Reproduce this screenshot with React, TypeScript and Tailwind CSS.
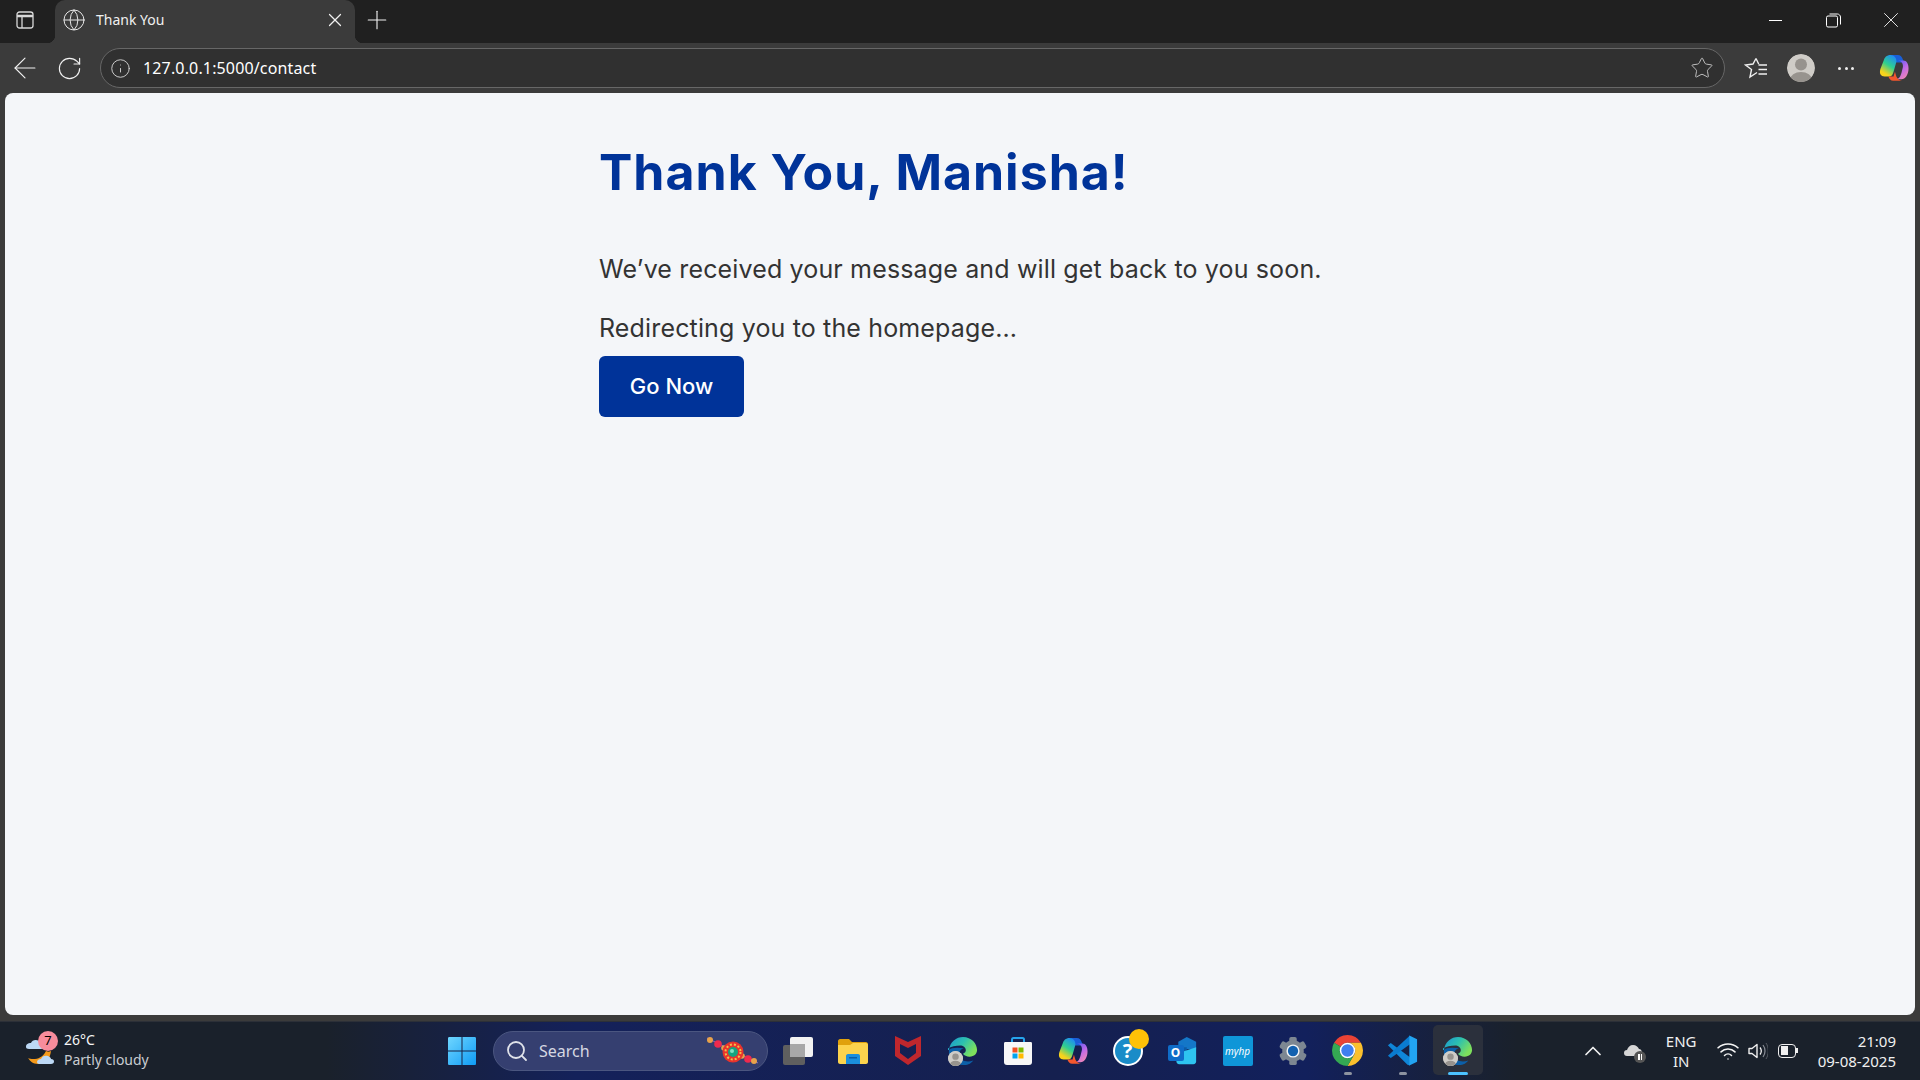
import { ArrowLeft, ChevronUp, Globe, Info, Plus, RotateCw, Search, Star, Wifi, X } from "lucide-react";

function Copilot({ size = 30, id }: { size?: number; id: string }) {
  return (
    <svg width={size} height={size} viewBox="0 0 32 32">
      <defs>
        <linearGradient id={`${id}a`} x1="0.7" y1="0" x2="0.2" y2="1">
          <stop offset="0" stopColor="#1f8ef0" />
          <stop offset="0.45" stopColor="#2fd08f" />
          <stop offset="0.85" stopColor="#f7d21c" />
        </linearGradient>
        <linearGradient id={`${id}b`} x1="0.2" y1="0" x2="0.8" y2="1">
          <stop offset="0" stopColor="#5d5cf2" />
          <stop offset="0.5" stopColor="#c06ae8" />
          <stop offset="1" stopColor="#f58ab0" />
        </linearGradient>
      </defs>
      <path fill="#1a5fd8" d="M12 2h8c3 0 4.500 2 5.500 5l1 3H19c-1.500 0-2.500-1-3-2.500l-.8-2.500C14.500 3.500 13.500 2.500 12 2z" />
      <path fill={`url(#${id}b)`} d="M20 8h6c3.500 0 5.500 3.500 5.500 8.500C31.500 23 28 28 24 28h-6c3 0 5-3 6-7l1.500-6c.7-3.500-2-7-5.500-7z" />
      <path fill={`url(#${id}a)`} d="M12.500 2C8 2 6 4.500 5 8l-3.500 9C0 22 2 25 6 25h5.500c2 0 3-2 4-5l3-10.500C19 6.500 17 2 12.500 2z" />
      <path fill="#f4572e" d="M10 25h5.500l1.500-5 1.500 5c1 2.500 3 4 6 4.500H15c-2.500 0-4-2-5-4.500z" />
    </svg>
  );
}

function EdgeIcon({ id }: { id: string }) {
  return (
    <div className="relative h-[30px] w-[30px]">
      <svg width="30" height="30" viewBox="0 0 32 32">
        <defs>
          <linearGradient id={`${id}a`} x1="0" y1="0" x2="1" y2="0.5">
            <stop offset="0" stopColor="#1a8fd8" />
            <stop offset="0.55" stopColor="#2cc0b0" />
            <stop offset="1" stopColor="#7ee05c" />
          </linearGradient>
        </defs>
        <path fill="#0c5fa8" d="M1 15c-1 9 6 16 15 16 4 0 8-1 11-5-7 3-15 0-15-6 0-3 1-6 5-7-6-1-14-1-16 2z" />
        <path fill={`url(#${id}a)`} d="M1 15C2 6 9 1 16 1c9 0 15 7 15 14 0 4-3 7-8 7-3 0-6-1-7-3 2-1 3-2 3-4 0-3-3-5-6-5-6 0-13 2-15 5z" />
      </svg>
      <div className="absolute bottom-0 left-0 flex h-[15px] w-[15px] items-center justify-center overflow-hidden rounded-full bg-[#cfccc7]">
        <Avatar size={15} />
      </div>
    </div>
  );
}

function Avatar({ size }: { size: number }) {
  return (
    <svg width={size} height={size} viewBox="0 0 28 28">
      <circle cx="14" cy="14" r="14" fill="#cfccc7" />
      <circle cx="14" cy="10.5" r="6" fill="#97938e" />
      <ellipse cx="14" cy="26" rx="11" ry="8" fill="#97938e" />
    </svg>
  );
}

function Chrome() {
  return (
    <svg width="31" height="31" viewBox="4 4 40 40">
      <path fill="#ea4335" d="M24 4A20 20 0 0 1 41.32 14H24A10 10 0 0 0 15.34 19L6.68 14A20 20 0 0 1 24 4z" />
      <path fill="#fbc02d" d="M41.32 14A20 20 0 0 1 24 44L32.66 29A10 10 0 0 0 24 14z" />
      <path fill="#34a853" d="M24 44A20 20 0 0 1 6.68 14L15.34 19A10 10 0 0 0 32.66 29z" />
      <circle cx="24" cy="24" r="10" fill="#fff" />
      <circle cx="24" cy="24" r="8" fill="#3f7ff0" />
    </svg>
  );
}

function VsCode() {
  return (
    <svg width="31" height="31" viewBox="0 0 100 100">
      <polygon fill="#0f86d8" points="3,33 12,26 74,72 74,98 66,96" />
      <polygon fill="#0a7bd0" points="74,2 74,30 24,66 12,74 3,67" />
      <polygon fill="#22a4f2" points="72,2 97,14 97,86 72,98" />
    </svg>
  );
}

function Gear() {
  const teeth = [0, 60, 120, 180, 240, 300];
  return (
    <svg width="30" height="30" viewBox="0 0 32 32">
      {teeth.map((a) => (
        <rect key={a} x="12" y="1" width="8" height="8" rx="2" fill="#7d8792" transform={`rotate(${a} 16 16)`} />
      ))}
      <circle cx="16" cy="16" r="11.5" fill="#7d8792" />
      <circle cx="16" cy="16" r="7" fill="#f2f4f6" />
      <circle cx="16" cy="16" r="5.5" fill="#1261b0" />
    </svg>
  );
}

function Outlook() {
  return (
    <div className="relative h-[30px] w-[30px]">
      <svg width="30" height="30" viewBox="0 0 32 32">
        <path fill="#1477c8" d="M11 6l9-5 10 5v8H11z" />
        <path fill="#0c5ca8" d="M9 12h11v8H9z" />
        <path fill="#2ec4f0" d="M9 19l21-7v15c0 2-1 3-3 3H12c-2 0-3-1-3-3z" />
      </svg>
      <div className="absolute left-0 top-[9px] flex h-[16px] w-[16px] items-center justify-center rounded-[2px] bg-[#0f6cc8] font-['Noto_Sans',sans-serif] text-[12px] font-bold leading-none text-white">
        O
      </div>
    </div>
  );
}

function Store() {
  return (
    <svg width="30" height="30" viewBox="0 0 30 30">
      <path d="M9 7V3.5c0-1 .5-1.500 1.500-1.500h9c1 0 1.500.5 1.500 1.500V7" fill="none" stroke="#26a4ec" strokeWidth="2" />
      <path fill="#f7f7f7" d="M1 7.500c0-1 .5-1.500 1.500-1.500h25c1 0 1.500.5 1.500 1.500V26c0 2-1 3-3 3H4c-2 0-3-1-3-3z" />
      <rect x="9.500" y="11.500" width="5" height="5" fill="#f25022" />
      <rect x="15.500" y="11.500" width="5" height="5" fill="#7fba00" />
      <rect x="9.500" y="17.500" width="5" height="5" fill="#00a4ef" />
      <rect x="15.500" y="17.500" width="5" height="5" fill="#ffb900" />
    </svg>
  );
}

function Folder() {
  return (
    <svg width="32" height="30" viewBox="0 0 32 30">
      <path fill="#e0a10c" d="M1 5c0-1 1-2 2-2h9l3 3h14c1 0 2 1 2 2v4H1z" />
      <path fill="#fcd34d" d="M1 9h12l3-2h13c1 0 2 1 2 2v17c0 1-1 2-2 2H3c-1 0-2-1-2-2z" />
      <path fill="#1b8fdd" d="M9 20c0-1 .5-2 2-2h10c1.500 0 2 1 2 2v8H9z" />
      <rect x="12" y="21" width="8" height="1.500" fill="#0b5fa8" />
    </svg>
  );
}

function Rakhi() {
  return (
    <svg width="55" height="30" viewBox="0 0 55 30">
      <line x1="2" y1="2" x2="53" y2="27" stroke="#8b6bc4" strokeWidth="1" />
      <circle cx="5" cy="4" r="3" fill="#e8a24a" />
      <circle cx="13" cy="8" r="3.800" fill="#ee2a4e" />
      <circle cx="19" cy="12" r="2.800" fill="#e8a24a" />
      <circle cx="37" cy="20" r="2.800" fill="#e8a24a" />
      <circle cx="43" cy="23" r="3.800" fill="#ee2a4e" />
      <circle cx="49" cy="25" r="3" fill="#e8a24a" />
      <circle cx="28" cy="16" r="10.500" fill="#e8332c" />
      <circle cx="28" cy="16" r="7.500" fill="none" stroke="#f2c04a" strokeWidth="2" strokeDasharray="2 2" />
      <circle cx="28" cy="16" r="5" fill="#16a37f" />
      <circle cx="27" cy="15" r="2" fill="#7fe0c4" />
    </svg>
  );
}

function Weather() {
  return (
    <div className="relative h-[40px] w-[38px]">
      <svg width="38" height="40" viewBox="0 0 38 40">
        <path fill="#bcd8f5" d="M2 16c0-3 2-4 5-4 1-3 5-4 8-2 1 1 2 2 2 3 2 0 3 1 3 3 0 1-1 2-3 2H5c-2 0-3-1-3-2z" />
        <path fill="#f59a1a" d="M4 27c4 2 14 2 18-7 2 1 3 1 5 0-1 8-5 13-13 13-5 0-8-3-10-6z" />
        <path fill="#bcd8f5" d="M13 31c0-2 2-3 4-3 1-3 4-4 7-3 2 1 3 2 3 3 2 0 3 1 3 2.500S29 33 27 33H15c-1 0-2-1-2-2z" />
      </svg>
      <div className="absolute left-[14px] top-[0px] flex h-[20px] w-[20px] items-center justify-center rounded-full bg-[#f78c9c] text-[13px] leading-none text-black">
        7
      </div>
    </div>
  );
}

function Slot({ children, active, pin }: { children: React.ReactNode; active?: boolean; pin?: boolean }) {
  return (
    <div className="relative flex h-[55px] w-[55px] shrink-0 items-center justify-center">
      {active && <div className="absolute left-[2.500px] top-[2px] h-[50px] w-[50px] rounded-[5px] bg-[#2b303c]" />}
      <div className="relative">{children}</div>
      {active && <div className="absolute bottom-[3px] left-[17.500px] h-[3px] w-[20px] rounded-full bg-[#4cc2ff]" />}
      {pin && <div className="absolute bottom-[3px] left-[23.500px] h-[3px] w-[8px] rounded-full bg-[#8d93a0]" />}
    </div>
  );
}

export default function App() {
  return (
    <div className="flex h-screen w-[1920px] flex-col overflow-hidden bg-[#3b3b3b] font-['Noto_Sans',sans-serif] text-white">
      {/* window title bar */}
      <div className="flex h-[43px] shrink-0 items-end bg-[#202020]">
        <div className="mr-[5px] flex h-[43px] w-[50px] items-center justify-center pb-[3px]">
          <svg width="18" height="18" viewBox="0 0 18 18" fill="none" stroke="#d8d8d8" strokeWidth="1.300">
            <rect x="1" y="1" width="16" height="16" rx="2.500" />
            <path d="M1 5h16" strokeWidth="2.500" />
            <path d="M6 5v12" />
          </svg>
        </div>
        <div className="relative flex h-[43px] w-[300px] items-center rounded-t-[10px] bg-[#3b3b3b] pb-[3px] pl-[7px] pr-[9px]">
          <div className="absolute bottom-0 left-[-8px] h-[8px] w-[8px] bg-[radial-gradient(circle_at_0_0,#202020_8px,#3b3b3b_8.500px)]" />
          <div className="absolute bottom-0 right-[-8px] h-[8px] w-[8px] bg-[radial-gradient(circle_at_100%_0,#202020_8px,#3b3b3b_8.500px)]" />
          <Globe size={24} strokeWidth={1} color="#e6e6e6" />
          <span className="ml-[10px] flex-1 text-[14px] leading-none text-[#f0f0f0]">Thank You</span>
          <X size={22} strokeWidth={1.300} color="#f0f0f0" />
        </div>
        <div className="flex h-[43px] w-[44px] items-center justify-center pb-[3px]">
          <Plus size={30} strokeWidth={0.900} color="#f0f0f0" />
        </div>
        <div className="ml-auto flex h-[43px] items-center pb-[3px]">
          <div className="flex w-[58px] justify-center">
            <div className="h-px w-[13px] bg-white" />
          </div>
          <div className="flex w-[58px] justify-center">
            <svg width="15" height="15" viewBox="0 0 15 15" fill="none" stroke="#fff" strokeWidth="1">
              <rect x="0.500" y="3" width="11" height="11" rx="1.500" />
              <path d="M3.500 1h8c1.500 0 3 1.500 3 3v7.500" />
            </svg>
          </div>
          <div className="flex w-[58px] justify-center">
            <X size={26} strokeWidth={0.800} color="#fff" />
          </div>
        </div>
      </div>

      {/* toolbar */}
      <div className="flex h-[50px] shrink-0 items-center pl-[8px]">
        <ArrowLeft size={34} strokeWidth={0.800} color="#f2f2f2" />
        <RotateCw size={27} strokeWidth={1} color="#f2f2f2" className="ml-[14px]" />
        <div className="ml-[17px] flex h-[40px] w-[1625px] items-center rounded-full border border-[#676767] bg-[#303030] pl-[9px] pr-[10px]">
          <Info size={21} strokeWidth={1.100} color="#cfcfcf" />
          <span className="ml-[12px] flex-1 text-[16px] leading-none tracking-[0.15px] text-white">127.0.0.1:5000/contact</span>
          <Star size={24} strokeWidth={1} color="#bdbdbd" />
        </div>
        <div className="ml-[16px] flex h-[30px] w-[30px] items-center justify-center">
          <svg width="24" height="22" viewBox="0 0 24 22" fill="none" stroke="#f0f0f0" strokeWidth="1.400">
            <path d="M12 1.500l2.700 5.500M16 8h7M14.500 12.500h8.500M14.500 17h8.500M14.500 8H21M13 15.500l-7 4.500 1.500-7.500L1.500 8l7.500-1 3-5.500" />
          </svg>
        </div>
        <div className="ml-[16px] overflow-hidden rounded-full">
          <Avatar size={28} />
        </div>
        <div className="ml-[16px] flex h-[30px] w-[30px] items-center justify-center gap-[3.500px]">
          <div className="h-[3px] w-[3px] rounded-full bg-[#f0f0f0]" />
          <div className="h-[3px] w-[3px] rounded-full bg-[#f0f0f0]" />
          <div className="h-[3px] w-[3px] rounded-full bg-[#f0f0f0]" />
        </div>
        <div className="ml-[18px]">
          <Copilot size={30} id="cpTop" />
        </div>
      </div>

      {/* page */}
      <div className="flex min-h-0 flex-1 px-[5px] pb-[6px]">
        <div className="flex-1 rounded-[8px] bg-[#f4f6f9] pl-[594px] pt-[49px] font-['Inter',sans-serif]">
          <h1 className="text-[50px] font-bold leading-[60px] tracking-[1px] text-[#003399]">Thank You, Manisha!</h1>
          <p className="mt-[49px] text-[25px] leading-[36px] tracking-[0.15px] text-[#333333]">We’ve received your message and will get back to you soon.</p>
          <p className="mt-[23px] text-[25px] leading-[36px] tracking-[0.15px] text-[#333333]">Redirecting you to the homepage...</p>
          <button className="mt-[10px] flex h-[61px] w-[145px] items-center justify-center rounded-[6px] bg-[#003399] text-[22px] font-medium text-white">
            Go Now
          </button>
        </div>
      </div>

      {/* taskbar */}
      <div className="flex h-[59px] shrink-0 items-center border-t border-[#2c3038] bg-[linear-gradient(90deg,#1a212b_0%,#1a212b_17%,#14215a_30%,#15204f_55%,#12205c_68%,#1a212b_79%,#1a212b_100%)] pb-[1px]">
        <div className="flex w-[434px] shrink-0 items-center pl-[24px]">
          <Weather />
          <div className="-mt-[2px] ml-[2px] flex flex-col text-[14px] leading-[20px]">
            <span className="text-[#f5f5f5]">26°C</span>
            <span className="text-[#c9ccd1]">Partly cloudy</span>
          </div>
        </div>
        <Slot>
          <svg width="30" height="30" viewBox="0 0 30 30">
            <defs>
              <linearGradient id="winA" x1="0" y1="0" x2="1" y2="1">
                <stop offset="0" stopColor="#6fd6ff" />
                <stop offset="1" stopColor="#0f9bf5" />
              </linearGradient>
            </defs>
            <path fill="url(#winA)" d="M1 2.500C1 1.500 1.500 1 2.500 1h12v13.500H1zM15.500 1h12c1 0 1.500.5 1.500 1.500v12H15.500zM1 15.500h13.500V29H2.500C1.500 29 1 28.500 1 27.500zM15.500 15.500H29v12c0 1-.5 1.500-1.500 1.500h-12z" />
          </svg>
        </Slot>
        <div className="relative ml-[4px] flex h-[40px] w-[275px] shrink-0 items-center rounded-full border border-[#4b5680] bg-[#353f70] pl-[11px]">
          <Search size={24} strokeWidth={1.800} color="#e0e3ea" />
          <span className="ml-[10px] text-[16px] leading-none text-[#d5d8e2]">Search</span>
          <div className="absolute right-[7px] top-[4px]">
            <Rakhi />
          </div>
        </div>
        <div className="ml-[2px] flex items-center">
          <Slot>
            <div className="relative h-[30px] w-[30px]">
              <div className="absolute bottom-[1px] left-0 h-[20px] w-[22px] rounded-[2px] bg-[#5f5f5f]" />
              <div className="absolute right-0 top-[1px] h-[20px] w-[23px] rounded-[2px] bg-[#f2f2f2]" />
              <div className="absolute bottom-[9px] left-[7px] h-[13px] w-[15px] bg-[#a8a8a8]" />
            </div>
          </Slot>
          <Slot>
            <Folder />
          </Slot>
          <Slot>
            <svg width="28" height="31" viewBox="0 0 28 31">
              <path fill="#c0272d" d="M1 1l13 6 13-6v20l-13 9-13-9zM6 9v9l8 6 8-6V9l-8 4z" fillRule="evenodd" />
            </svg>
          </Slot>
          <Slot>
            <EdgeIcon id="edgeA" />
          </Slot>
          <Slot>
            <Store />
          </Slot>
          <Slot>
            <Copilot size={30} id="cpBar" />
          </Slot>
          <Slot>
            <div className="relative h-[30px] w-[30px]">
              <div className="flex h-[30px] w-[30px] items-center justify-center rounded-full border-2 border-white bg-[#1a8cc8] text-[20px] font-bold leading-none text-white">?</div>
              <div className="absolute left-[16px] top-[-7px] h-[20px] w-[20px] rounded-full bg-[#ffc107]" />
            </div>
          </Slot>
          <Slot>
            <Outlook />
          </Slot>
          <Slot>
            <div className="flex h-[30px] w-[30px] items-center justify-center rounded-[2px] bg-[#0f96d8] text-[10px] italic leading-none text-white">myhp</div>
          </Slot>
          <Slot>
            <Gear />
          </Slot>
          <Slot pin>
            <Chrome />
          </Slot>
          <Slot pin>
            <VsCode />
          </Slot>
          <Slot active>
            <EdgeIcon id="edgeB" />
          </Slot>
        </div>

        {/* tray */}
        <div className="ml-auto flex items-center pr-[24px]">
          <ChevronUp size={28} strokeWidth={1.500} color="#f0f0f0" />
          <div className="relative ml-[16px] h-[20px] w-[22px]">
            <svg width="20" height="14" viewBox="0 0 20 14" className="absolute left-0 top-[2px]">
              <path fill="#d6d6d6" d="M1 10c0-2 1-3 3-3 1-3 3-5 6-5s5 2 6 4c2 0 3 2 3 4 0 1-1 3-3 3H4c-2 0-3-1-3-3z" />
            </svg>
            <div className="absolute bottom-[-2px] right-[-1px] flex h-[12px] w-[12px] items-center justify-center gap-px rounded-full bg-[#555]">
              <div className="h-[6px] w-[1.500px] bg-white" />
              <div className="h-[6px] w-[1.500px] bg-white" />
            </div>
          </div>
          <div className="ml-[21px] flex w-[30px] flex-col items-center text-[15px] leading-[20px] text-[#f0f0f0]">
            <span>ENG</span>
            <span>IN</span>
          </div>
          <Wifi size={24} strokeWidth={1.500} color="#f5f5f5" className="ml-[20px]" />
          <svg width="20" height="18" viewBox="0 0 20 18" fill="none" className="ml-[8px]">
            <path d="M1 6.500h3L9 2.500v13l-5-4H1z" stroke="#f0f0f0" strokeWidth="1.400" strokeLinejoin="round" />
            <path d="M12 5.500c1.500 2 1.500 5 0 7" stroke="#f0f0f0" strokeWidth="1.300" />
            <path d="M15 3c2.700 3.500 2.700 8.500 0 12" stroke="#8a8e96" strokeWidth="1.200" />
            <path d="M18 1c3 4.500 3 11.500 0 16" stroke="#5a5e66" strokeWidth="1" />
          </svg>
          <div className="ml-[10px] flex items-center">
            <div className="flex h-[14px] w-[18px] items-center rounded-[4px] border-[1.500px] border-[#f0f0f0] p-[1.500px]">
              <div className="h-full w-[7px] bg-[#f0f0f0]" />
            </div>
            <div className="h-[5px] w-[1.500px] bg-[#f0f0f0]" />
          </div>
          <div className="ml-[20px] flex flex-col items-end text-[15px] leading-[20px] text-[#f0f0f0]">
            <span>21:09</span>
            <span>09-08-2025</span>
          </div>
        </div>
      </div>
    </div>
  );
}
